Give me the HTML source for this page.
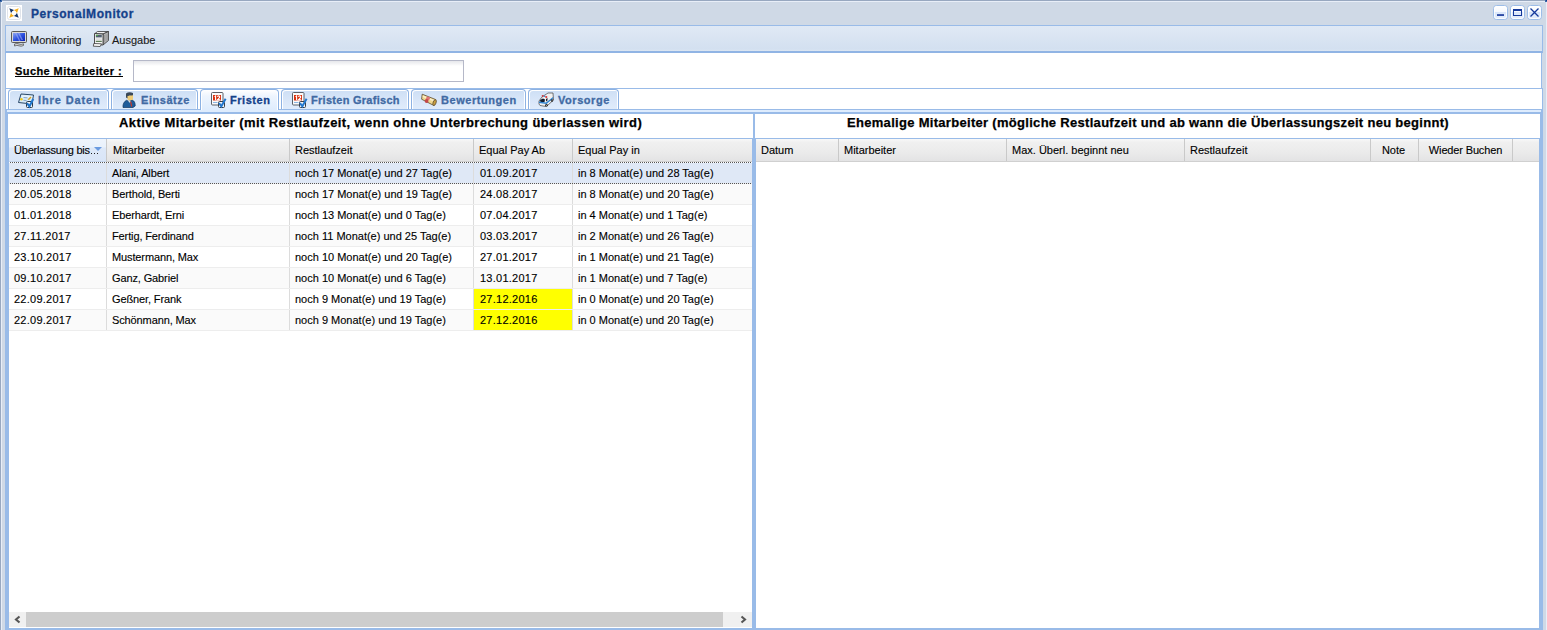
<!DOCTYPE html>
<html><head><meta charset="utf-8"><style>
*{box-sizing:border-box;margin:0;padding:0}
html,body{width:1547px;height:630px;overflow:hidden;background:#cfd9e6;font-family:"Liberation Sans",sans-serif;font-size:11px;color:#000}
.a{position:absolute}
.t{position:absolute;white-space:nowrap;line-height:13px;font-size:11px;-webkit-text-stroke:0.12px currentColor}
svg{position:absolute;overflow:visible}
</style></head><body>
<div class="a" style="left:0;top:0;width:1547px;height:1px;background:#98a8c0"></div>
<div class="a" style="left:1px;top:1px;width:1546px;height:1px;background:#e8eef8"></div>
<div class="a" style="left:0;top:0;width:1px;height:630px;background:#98a8c0"></div>
<div class="a" style="left:1px;top:1px;width:1px;height:629px;background:#e8eef8"></div>
<div class="a" style="left:1546px;top:1px;width:1px;height:629px;background:#e8eef8"></div>
<div class="a" style="left:0;top:0;width:2px;height:2px;background:#3a68a8"></div>
<div class="a" style="left:0;top:0;width:1px;height:1px;background:#0a3c8c"></div>
<div class="a" style="left:1545px;top:0;width:2px;height:2px;background:#3a68a8"></div>
<div class="a" style="left:1546px;top:0;width:1px;height:1px;background:#0a3c8c"></div>
<div class="a" style="left:2px;top:2px;width:1px;height:1px;background:#e8eef8"></div>
<svg style="left:6px;top:5px" width="16" height="16" viewBox="0 0 16 16">
<rect x="0" y="0" width="16" height="16" fill="#fff"/>
<rect x="1.5" y="1.5" width="13" height="13" rx="2" fill="none" stroke="#dfe3ea" stroke-width="1"/>
<polygon points="3.3,3.3 8,5 5,8" fill="#1b3766"/>
<polygon points="12.7,3.3 11,8 8,5" fill="#f4ae1c"/>
<polygon points="3.3,12.7 5,8 8,11" fill="#f4ae1c"/>
<polygon points="12.7,12.7 8,11 11,8" fill="#1b3766"/>
<circle cx="8" cy="8" r="2.3" fill="#fff"/>
</svg>
<div class="t" style="left:31px;top:7px;font-size:12px;line-height:15px;font-weight:bold;color:#15428b;letter-spacing:0.55px;-webkit-text-stroke:0.3px #15428b">PersonalMonitor</div>
<svg style="left:1493px;top:5px" width="15" height="15" viewBox="0 0 15 15">
<defs><linearGradient id="wg1493" x1="0" y1="0" x2="0" y2="1"><stop offset="0" stop-color="#fff"/><stop offset="0.45" stop-color="#f6f9fe"/><stop offset="0.5" stop-color="#d8e6fa"/><stop offset="1" stop-color="#e6effc"/></linearGradient></defs>
<rect x="0.5" y="0.5" width="14" height="14" rx="3" fill="url(#wg1493)" stroke="#9cbde8"/>
<rect x="1.5" y="1.5" width="12" height="12" rx="2" fill="none" stroke="#fff" stroke-opacity="0.8"/>
<rect x="4" y="9.2" width="7" height="1.7" fill="#1a3a9c"/></svg>
<svg style="left:1510px;top:5px" width="15" height="15" viewBox="0 0 15 15">
<defs><linearGradient id="wg1510" x1="0" y1="0" x2="0" y2="1"><stop offset="0" stop-color="#fff"/><stop offset="0.45" stop-color="#f6f9fe"/><stop offset="0.5" stop-color="#d8e6fa"/><stop offset="1" stop-color="#e6effc"/></linearGradient></defs>
<rect x="0.5" y="0.5" width="14" height="14" rx="3" fill="url(#wg1510)" stroke="#9cbde8"/>
<rect x="1.5" y="1.5" width="12" height="12" rx="2" fill="none" stroke="#fff" stroke-opacity="0.8"/>
<rect x="3.5" y="4.5" width="8" height="6" fill="none" stroke="#15399b" stroke-width="1"/><rect x="3" y="4" width="9" height="2" fill="#15399b"/></svg>
<svg style="left:1527px;top:5px" width="15" height="15" viewBox="0 0 15 15">
<defs><linearGradient id="wg1527" x1="0" y1="0" x2="0" y2="1"><stop offset="0" stop-color="#fff"/><stop offset="0.45" stop-color="#f6f9fe"/><stop offset="0.5" stop-color="#d8e6fa"/><stop offset="1" stop-color="#e6effc"/></linearGradient></defs>
<rect x="0.5" y="0.5" width="14" height="14" rx="3" fill="url(#wg1527)" stroke="#9cbde8"/>
<rect x="1.5" y="1.5" width="12" height="12" rx="2" fill="none" stroke="#fff" stroke-opacity="0.8"/>
<path d="M3.5,3.5 L11.5,11.5 M11.5,3.5 L3.5,11.5" stroke="#15399b" stroke-width="1.3"/></svg>
<div class="a" style="left:5px;top:25px;width:1538px;height:28px;border:1px solid #99bbe8;border-bottom:2px solid #90b4e4;background:linear-gradient(#e0e9f5,#d9e4f2 50%,#d3e0f0 92%,#dce6f2)"></div>
<svg style="left:11px;top:31px" width="16" height="16" viewBox="0 0 16 16">
<rect x="0.5" y="0.5" width="15" height="11" rx="1" fill="#d8d8d8" stroke="#5a5a5a"/>
<defs><linearGradient id="mon" x1="0" y1="0" x2="1" y2="1"><stop offset="0" stop-color="#8fa6f0"/><stop offset="0.5" stop-color="#2e52e0"/><stop offset="1" stop-color="#0a22b8"/></linearGradient></defs>
<rect x="2" y="2" width="12" height="8" fill="url(#mon)"/>
<path d="M4,2 L5.5,2 L9.5,10 L8,10 Z M7,2 L8.5,2 L12,9 L10.5,9 Z" fill="#a8b8f8" opacity="0.55"/>
<path d="M3.5,13 Q6,11.8 8,13 Q10,14 12.5,12.8 L12.5,14.5 Q10,15.8 8,14.8 Q6,13.8 3.5,15 Z" fill="#d4d4d4" stroke="#5a5a5a" stroke-width="0.8"/>
</svg>
<div class="t" style="left:30px;top:34px;color:#1a1a1a">Monitoring</div>
<svg style="left:93px;top:31px" width="16" height="16" viewBox="0 0 16 16">
<path d="M2,2.5 L4.5,0.5 L15.5,0.5 L10,3 Z" fill="#f2f2f2" stroke="#3a3a3a" stroke-width="0.8"/>
<path d="M10,3 L15.5,0.5 L15.5,9.5 L10,14 Z" fill="#b4b4b4" stroke="#3a3a3a" stroke-width="0.8"/>
<path d="M11.5,4 L11.5,11.5 M13,3.3 L13,10.3 M14.3,2.6 L14.3,9.3" stroke="#8c8c8c" stroke-width="0.6"/>
<path d="M1.5,2.5 L10,3 L10,14 L1.5,13.5 Z" fill="#f4f4f4" stroke="#3a3a3a" stroke-width="0.9"/>
<rect x="2.8" y="3.8" width="6" height="2.6" fill="#506070"/>
<rect x="3" y="3.8" width="2" height="1" fill="#58b040"/>
<rect x="2.8" y="7.2" width="6" height="2.2" fill="#e0e0e0"/>
<rect x="2.8" y="9.8" width="6" height="1.2" fill="#5e7e58"/>
<path d="M0.8,12.5 L8.5,12.8 L7.2,15.5 L0.3,15.2 Z" fill="#fafafa" stroke="#3a3a3a" stroke-width="0.8"/>
</svg>
<div class="t" style="left:112px;top:34px;color:#1a1a1a">Ausgabe</div>
<div class="a" style="left:5px;top:53px;width:1537px;height:36px;background:#fff;border-left:1px solid #99bbe8;border-right:1px solid #99bbe8"></div>
<div class="t" style="left:15px;top:65px;font-weight:bold;letter-spacing:0.42px;-webkit-text-stroke:0.25px #000">Suche Mitarbeiter :</div>
<div class="a" style="left:15px;top:76px;width:108px;height:1px;background:#000"></div>
<div class="a" style="left:133px;top:60px;width:331px;height:22px;border:1px solid #b5b8c8;background:linear-gradient(#e6e7eb,#fff 5px)"></div>
<div class="a" style="left:5px;top:88px;width:1538px;height:21px;background:#fff;border-left:1px solid #99bbe8;border-right:1px solid #99bbe8"></div>
<div class="a" style="left:5px;top:88px;width:1538px;height:1px;background:#99bbe8"></div>
<div class="a" style="left:5px;top:109px;width:1538px;height:4px;background:#99bbe8"></div>
<div class="a" style="left:6px;top:109px;width:1536px;height:4px;border:1px solid #99bbe8;background:#deecfd"></div>
<div class="a" style="left:8px;top:89px;width:101px;height:20px;border:1px solid #8db2e3;border-bottom:none;border-radius:4px 4px 0 0;background:linear-gradient(#cddff5,#dae7f9 60%,#e0ecfb);box-shadow:inset 1px 1px 0 #fff,inset -1px 0 0 #fff"></div>
<svg style="left:18px;top:92px" width="16" height="16" viewBox="0 0 16 16"><path d="M3,2 L15.5,3 L14,12 L0.5,10.5 Z" fill="#d6ebfa" stroke="#2a4868" stroke-width="1"/>
<path d="M4,3.2 L14.3,4 L13.8,6.5 L3.5,5.5 Z" fill="#e6f3fc"/>
<circle cx="3.4" cy="7.2" r="1.3" fill="#f0c81c"/>
<path d="M5.5,5.5 L9.5,5.8 M5.5,8.3 L8.5,8.5" stroke="#7e9cbc" stroke-width="0.9"/>
<path d="M9.5,7.5 L12.5,4.5 L13.5,5.5 L11,8 Z" fill="#d4a020"/>
<rect x="8.5" y="9.5" width="6" height="6" rx="1" fill="#f4f6f8" stroke="#2d3a48" stroke-width="1"/>
<path d="M9,11 L11.4,14.4 L15.2,7" fill="none" stroke="#1f76cc" stroke-width="2.1"/></svg>
<div class="t" style="left:38px;top:94px;font-weight:bold;color:#416aa3;letter-spacing:0.88px;-webkit-text-stroke:0.3px #416aa3">Ihre Daten</div>
<div class="a" style="left:111px;top:89px;width:87px;height:20px;border:1px solid #8db2e3;border-bottom:none;border-radius:4px 4px 0 0;background:linear-gradient(#cddff5,#dae7f9 60%,#e0ecfb);box-shadow:inset 1px 1px 0 #fff,inset -1px 0 0 #fff"></div>
<svg style="left:121px;top:92px" width="16" height="16" viewBox="0 0 16 16"><path d="M5,1.5 Q8,-0.5 12,1 L12,4.5 L8.5,3.5 L6.5,6.5 L5,5.5 Z" fill="#3a4858"/>
<path d="M6.5,4 L12,3.3 L12,7.5 Q9,9.8 6.5,7.5 Z" fill="#f0cd78"/>
<path d="M2,15.5 Q1.5,10.5 5.5,8.3 L8,9.5 L11.2,8.3 Q14.3,9 14.2,14 L12,15.5 Z" fill="#1e5c9a" stroke="#0f3560" stroke-width="0.7"/>
<path d="M7,8.8 L9.8,9.4 L9,11 Z" fill="#f4f4f4"/>
<path d="M9,9.8 L10.2,9.6 L11.2,14 L10.2,15 Z" fill="#c83a2a"/></svg>
<div class="t" style="left:141px;top:94px;font-weight:bold;color:#416aa3;letter-spacing:0.55px;-webkit-text-stroke:0.3px #416aa3">Einsätze</div>
<div class="a" style="left:200px;top:89px;width:79px;height:21px;border:1px solid #8db2e3;border-bottom:none;border-radius:4px 4px 0 0;background:linear-gradient(#ffffff,#eef5fe 30%,#deecfd);box-shadow:inset 1px 1px 0 #fff,inset -1px 0 0 #fff"></div>
<svg style="left:210px;top:92px" width="16" height="16" viewBox="0 0 16 16"><rect x="1.5" y="0.5" width="11.5" height="12.5" rx="1" fill="#fafafa" stroke="#5a6068" stroke-width="1"/>
<rect x="3" y="3" width="8" height="5.5" fill="#d8300e"/>
<path d="M4.6,4.8 L5.6,3.9 L5.6,8.2" fill="none" stroke="#fff" stroke-width="1.1"/>
<path d="M7.3,4.6 Q8.6,3.4 9.6,4.4 Q10,5.6 8.6,6.6 L7.3,7.9 L10.2,7.9" fill="none" stroke="#fff" stroke-width="1.1"/>
<rect x="3" y="10" width="4.5" height="1" fill="#8db6e0"/>
<rect x="8.5" y="9.5" width="6" height="6" rx="1" fill="#f0f4f8" stroke="#3a4048" stroke-width="1"/>
<path d="M9,11 L11.3,14.3 L15.6,6.8" fill="none" stroke="#2378cf" stroke-width="2"/></svg>
<div class="t" style="left:230px;top:94px;font-weight:bold;color:#15428b;letter-spacing:0.55px;-webkit-text-stroke:0.3px #15428b">Fristen</div>
<div class="a" style="left:281px;top:89px;width:128px;height:20px;border:1px solid #8db2e3;border-bottom:none;border-radius:4px 4px 0 0;background:linear-gradient(#cddff5,#dae7f9 60%,#e0ecfb);box-shadow:inset 1px 1px 0 #fff,inset -1px 0 0 #fff"></div>
<svg style="left:291px;top:92px" width="16" height="16" viewBox="0 0 16 16"><rect x="1.5" y="0.5" width="11.5" height="12.5" rx="1" fill="#fafafa" stroke="#5a6068" stroke-width="1"/>
<rect x="3" y="3" width="8" height="5.5" fill="#d8300e"/>
<path d="M4.6,4.8 L5.6,3.9 L5.6,8.2" fill="none" stroke="#fff" stroke-width="1.1"/>
<path d="M7.3,4.6 Q8.6,3.4 9.6,4.4 Q10,5.6 8.6,6.6 L7.3,7.9 L10.2,7.9" fill="none" stroke="#fff" stroke-width="1.1"/>
<rect x="3" y="10" width="4.5" height="1" fill="#8db6e0"/>
<rect x="8.5" y="9.5" width="6" height="6" rx="1" fill="#f0f4f8" stroke="#3a4048" stroke-width="1"/>
<path d="M9,11 L11.3,14.3 L15.6,6.8" fill="none" stroke="#2378cf" stroke-width="2"/></svg>
<div class="t" style="left:311px;top:94px;font-weight:bold;color:#416aa3;letter-spacing:0.28px;-webkit-text-stroke:0.3px #416aa3">Fristen Grafisch</div>
<div class="a" style="left:411px;top:89px;width:115px;height:20px;border:1px solid #8db2e3;border-bottom:none;border-radius:4px 4px 0 0;background:linear-gradient(#cddff5,#dae7f9 60%,#e0ecfb);box-shadow:inset 1px 1px 0 #fff,inset -1px 0 0 #fff"></div>
<svg style="left:421px;top:92px" width="16" height="16" viewBox="0 0 16 16"><path d="M1.2,2.2 L14.8,7.6 L13,13.6 L0.6,7.2 Z" fill="#f0d890" stroke="#5a4a30" stroke-width="0.8"/>
<path d="M2,3.5 L14,8.3 L13.6,9.8 L1.6,5 Z" fill="#fbefc8"/>
<ellipse cx="13.6" cy="10.6" rx="1.5" ry="3" transform="rotate(20 13.6 10.6)" fill="#c9a040" stroke="#5a4a30" stroke-width="0.7"/>
<circle cx="7" cy="6.3" r="1.9" fill="#e07474"/>
<circle cx="5.6" cy="9" r="1.9" fill="#c44848"/></svg>
<div class="t" style="left:441px;top:94px;font-weight:bold;color:#416aa3;letter-spacing:0.55px;-webkit-text-stroke:0.3px #416aa3">Bewertungen</div>
<div class="a" style="left:528px;top:89px;width:91px;height:20px;border:1px solid #8db2e3;border-bottom:none;border-radius:4px 4px 0 0;background:linear-gradient(#cddff5,#dae7f9 60%,#e0ecfb);box-shadow:inset 1px 1px 0 #fff,inset -1px 0 0 #fff"></div>
<svg style="left:538px;top:92px" width="16" height="16" viewBox="0 0 16 16"><path d="M1,9 L4,5 L8.5,2 L10,1 L15,1 L15.5,8 L9.5,13.5 L8,14.5 L2,13.5 L1,12 Z" fill="#f0f0f0" stroke="#444" stroke-width="0.7"/>
<path d="M2,8 L5,6.5 L7,7.5 L6.5,10 L2.5,10 Z" fill="#0e1a2a"/>
<path d="M8,7 L9.5,6 L9.5,8.5 L8,9.5 Z" fill="#1a2030"/>
<path d="M1,9.5 L8,10.5 L15,5 L15,6.5 L8.5,12 L1,11 Z" fill="#2a80d0"/>
<rect x="3.8" y="3.2" width="1.8" height="1.4" fill="#d82020"/><rect x="5.8" y="3.8" width="1.6" height="1.2" fill="#3a90e0"/><rect x="7.4" y="4.2" width="1.8" height="1.6" fill="#d82020"/>
<circle cx="8.5" cy="13.3" r="1.3" fill="#222"/><circle cx="8.5" cy="13.3" r="0.5" fill="#ddd"/>
<circle cx="14" cy="8.5" r="1.2" fill="#222"/><circle cx="14" cy="8.5" r="0.45" fill="#ddd"/></svg>
<div class="t" style="left:558px;top:94px;font-weight:bold;color:#416aa3;letter-spacing:0.55px;-webkit-text-stroke:0.3px #416aa3">Vorsorge</div>
<div class="a" style="left:5px;top:113px;width:1538px;height:517px;background:#99bbe8"></div>
<div class="a" style="left:8px;top:114px;width:745px;height:24px;background:#fff"></div>
<div class="a" style="left:755px;top:114px;width:785px;height:24px;background:#fff"></div>
<div class="t" style="left:119px;top:115px;font-size:13px;line-height:15px;font-weight:bold;letter-spacing:0.4px;-webkit-text-stroke:0.25px #000">Aktive Mitarbeiter (mit Restlaufzeit, wenn ohne Unterbrechung überlassen wird)</div>
<div class="t" style="left:847px;top:115px;font-size:13px;line-height:15px;font-weight:bold;letter-spacing:0.3px;-webkit-text-stroke:0.25px #000">Ehemalige Mitarbeiter (mögliche Restlaufzeit und ab wann die Überlassungszeit neu beginnt)</div>
<div class="a" style="left:9px;top:139px;width:743px;height:489px;background:#fff"></div>
<div class="a" style="left:756px;top:139px;width:783px;height:489px;background:#fff"></div>
<div class="a" style="left:9px;top:139px;width:743px;height:23px;background:linear-gradient(#f8f8f8,#f0f0f0 15%,#ebebeb 60%,#e3e3e4);border-bottom:1px solid #d0d0d0"></div>
<div class="a" style="left:9px;top:139px;width:97px;height:23px;background:linear-gradient(#eef4fc,#e9f1fb 8px,#dde8f8 9px,#d9e5f7);border-bottom:1px solid #c5d6ee"></div>
<div class="a" style="left:106px;top:139px;width:1px;height:22px;background:#c9c9c9"></div>
<div class="a" style="left:289px;top:139px;width:1px;height:22px;background:#c9c9c9"></div>
<div class="a" style="left:473px;top:139px;width:1px;height:22px;background:#c9c9c9"></div>
<div class="a" style="left:572px;top:139px;width:1px;height:22px;background:#c9c9c9"></div>
<div class="t" style="left:14px;top:144px;letter-spacing:-0.2px">Überlassung bis</div>
<div class="t" style="left:113px;top:144px">Mitarbeiter</div>
<div class="t" style="left:295px;top:144px">Restlaufzeit</div>
<div class="t" style="left:479px;top:144px">Equal Pay Ab</div>
<div class="t" style="left:578px;top:144px">Equal Pay in</div>
<div class="a" style="left:91px;top:153px;width:1px;height:1px;background:#222"></div>
<div class="a" style="left:94px;top:153px;width:1px;height:1px;background:#222"></div>
<div class="a" style="left:97px;top:153px;width:1px;height:1px;background:#222"></div>
<svg style="left:94px;top:147px" width="8" height="4" viewBox="0 0 8 4"><polygon points="0,0 8,0 4,4" fill="#6a9ae0"/></svg>
<div class="a" style="left:9px;top:163px;width:743px;height:20px;background:#dfe8f6"></div>
<div class="a" style="left:9px;top:183px;width:743px;height:1px;background:#ededed"></div>
<div class="a" style="left:106px;top:163px;width:1px;height:20px;background:#dcdcdc"></div>
<div class="a" style="left:289px;top:163px;width:1px;height:20px;background:#dcdcdc"></div>
<div class="a" style="left:473px;top:163px;width:1px;height:20px;background:#dcdcdc"></div>
<div class="a" style="left:572px;top:163px;width:1px;height:20px;background:#dcdcdc"></div>
<div class="t" style="left:14px;top:167px;letter-spacing:0.25px">28.05.2018</div>
<div class="t" style="left:112px;top:167px;letter-spacing:-0.12px">Alani, Albert</div>
<div class="t" style="left:295px;top:167px">noch 17 Monat(e) und 27 Tag(e)</div>
<div class="t" style="left:480px;top:167px;letter-spacing:0.25px">01.09.2017</div>
<div class="t" style="left:578px;top:167px">in 8 Monat(e) und 28 Tag(e)</div>
<div class="a" style="left:9px;top:184px;width:743px;height:20px;background:#fafafa"></div>
<div class="a" style="left:9px;top:204px;width:743px;height:1px;background:#ededed"></div>
<div class="a" style="left:106px;top:184px;width:1px;height:20px;background:#dcdcdc"></div>
<div class="a" style="left:289px;top:184px;width:1px;height:20px;background:#dcdcdc"></div>
<div class="a" style="left:473px;top:184px;width:1px;height:20px;background:#dcdcdc"></div>
<div class="a" style="left:572px;top:184px;width:1px;height:20px;background:#dcdcdc"></div>
<div class="t" style="left:14px;top:188px;letter-spacing:0.25px">20.05.2018</div>
<div class="t" style="left:112px;top:188px;letter-spacing:-0.12px">Berthold, Berti</div>
<div class="t" style="left:295px;top:188px">noch 17 Monat(e) und 19 Tag(e)</div>
<div class="t" style="left:480px;top:188px;letter-spacing:0.25px">24.08.2017</div>
<div class="t" style="left:578px;top:188px">in 8 Monat(e) und 20 Tag(e)</div>
<div class="a" style="left:9px;top:205px;width:743px;height:20px;background:#fff"></div>
<div class="a" style="left:9px;top:225px;width:743px;height:1px;background:#ededed"></div>
<div class="a" style="left:106px;top:205px;width:1px;height:20px;background:#dcdcdc"></div>
<div class="a" style="left:289px;top:205px;width:1px;height:20px;background:#dcdcdc"></div>
<div class="a" style="left:473px;top:205px;width:1px;height:20px;background:#dcdcdc"></div>
<div class="a" style="left:572px;top:205px;width:1px;height:20px;background:#dcdcdc"></div>
<div class="t" style="left:14px;top:209px;letter-spacing:0.25px">01.01.2018</div>
<div class="t" style="left:112px;top:209px;letter-spacing:-0.12px">Eberhardt, Erni</div>
<div class="t" style="left:295px;top:209px">noch 13 Monat(e) und 0 Tag(e)</div>
<div class="t" style="left:480px;top:209px;letter-spacing:0.25px">07.04.2017</div>
<div class="t" style="left:578px;top:209px">in 4 Monat(e) und 1 Tag(e)</div>
<div class="a" style="left:9px;top:226px;width:743px;height:20px;background:#fafafa"></div>
<div class="a" style="left:9px;top:246px;width:743px;height:1px;background:#ededed"></div>
<div class="a" style="left:106px;top:226px;width:1px;height:20px;background:#dcdcdc"></div>
<div class="a" style="left:289px;top:226px;width:1px;height:20px;background:#dcdcdc"></div>
<div class="a" style="left:473px;top:226px;width:1px;height:20px;background:#dcdcdc"></div>
<div class="a" style="left:572px;top:226px;width:1px;height:20px;background:#dcdcdc"></div>
<div class="t" style="left:14px;top:230px;letter-spacing:0.25px">27.11.2017</div>
<div class="t" style="left:112px;top:230px;letter-spacing:-0.12px">Fertig, Ferdinand</div>
<div class="t" style="left:295px;top:230px">noch 11 Monat(e) und 25 Tag(e)</div>
<div class="t" style="left:480px;top:230px;letter-spacing:0.25px">03.03.2017</div>
<div class="t" style="left:578px;top:230px">in 2 Monat(e) und 26 Tag(e)</div>
<div class="a" style="left:9px;top:247px;width:743px;height:20px;background:#fff"></div>
<div class="a" style="left:9px;top:267px;width:743px;height:1px;background:#ededed"></div>
<div class="a" style="left:106px;top:247px;width:1px;height:20px;background:#dcdcdc"></div>
<div class="a" style="left:289px;top:247px;width:1px;height:20px;background:#dcdcdc"></div>
<div class="a" style="left:473px;top:247px;width:1px;height:20px;background:#dcdcdc"></div>
<div class="a" style="left:572px;top:247px;width:1px;height:20px;background:#dcdcdc"></div>
<div class="t" style="left:14px;top:251px;letter-spacing:0.25px">23.10.2017</div>
<div class="t" style="left:112px;top:251px;letter-spacing:-0.12px">Mustermann, Max</div>
<div class="t" style="left:295px;top:251px">noch 10 Monat(e) und 20 Tag(e)</div>
<div class="t" style="left:480px;top:251px;letter-spacing:0.25px">27.01.2017</div>
<div class="t" style="left:578px;top:251px">in 1 Monat(e) und 21 Tag(e)</div>
<div class="a" style="left:9px;top:268px;width:743px;height:20px;background:#fafafa"></div>
<div class="a" style="left:9px;top:288px;width:743px;height:1px;background:#ededed"></div>
<div class="a" style="left:106px;top:268px;width:1px;height:20px;background:#dcdcdc"></div>
<div class="a" style="left:289px;top:268px;width:1px;height:20px;background:#dcdcdc"></div>
<div class="a" style="left:473px;top:268px;width:1px;height:20px;background:#dcdcdc"></div>
<div class="a" style="left:572px;top:268px;width:1px;height:20px;background:#dcdcdc"></div>
<div class="t" style="left:14px;top:272px;letter-spacing:0.25px">09.10.2017</div>
<div class="t" style="left:112px;top:272px;letter-spacing:-0.12px">Ganz, Gabriel</div>
<div class="t" style="left:295px;top:272px">noch 10 Monat(e) und 6 Tag(e)</div>
<div class="t" style="left:480px;top:272px;letter-spacing:0.25px">13.01.2017</div>
<div class="t" style="left:578px;top:272px">in 1 Monat(e) und 7 Tag(e)</div>
<div class="a" style="left:9px;top:289px;width:743px;height:20px;background:#fff"></div>
<div class="a" style="left:9px;top:309px;width:743px;height:1px;background:#ededed"></div>
<div class="a" style="left:474px;top:289px;width:98px;height:20px;background:#ffff00"></div>
<div class="a" style="left:106px;top:289px;width:1px;height:20px;background:#dcdcdc"></div>
<div class="a" style="left:289px;top:289px;width:1px;height:20px;background:#dcdcdc"></div>
<div class="a" style="left:473px;top:289px;width:1px;height:20px;background:#dcdcdc"></div>
<div class="a" style="left:572px;top:289px;width:1px;height:20px;background:#dcdcdc"></div>
<div class="t" style="left:14px;top:293px;letter-spacing:0.25px">22.09.2017</div>
<div class="t" style="left:112px;top:293px;letter-spacing:-0.12px">Geßner, Frank</div>
<div class="t" style="left:295px;top:293px">noch 9 Monat(e) und 19 Tag(e)</div>
<div class="t" style="left:480px;top:293px;letter-spacing:0.25px">27.12.2016</div>
<div class="t" style="left:578px;top:293px">in 0 Monat(e) und 20 Tag(e)</div>
<div class="a" style="left:9px;top:310px;width:743px;height:20px;background:#fafafa"></div>
<div class="a" style="left:9px;top:330px;width:743px;height:1px;background:#ededed"></div>
<div class="a" style="left:474px;top:310px;width:98px;height:20px;background:#ffff00"></div>
<div class="a" style="left:106px;top:310px;width:1px;height:20px;background:#dcdcdc"></div>
<div class="a" style="left:289px;top:310px;width:1px;height:20px;background:#dcdcdc"></div>
<div class="a" style="left:473px;top:310px;width:1px;height:20px;background:#dcdcdc"></div>
<div class="a" style="left:572px;top:310px;width:1px;height:20px;background:#dcdcdc"></div>
<div class="t" style="left:14px;top:314px;letter-spacing:0.25px">22.09.2017</div>
<div class="t" style="left:112px;top:314px;letter-spacing:-0.12px">Schönmann, Max</div>
<div class="t" style="left:295px;top:314px">noch 9 Monat(e) und 19 Tag(e)</div>
<div class="t" style="left:480px;top:314px;letter-spacing:0.25px">27.12.2016</div>
<div class="t" style="left:578px;top:314px">in 0 Monat(e) und 20 Tag(e)</div>
<div class="a" style="left:9px;top:162px;width:743px;height:1px;background:repeating-linear-gradient(90deg,transparent 0 1px,#555 1px 2px)"></div>
<div class="a" style="left:9px;top:183px;width:743px;height:1px;background:repeating-linear-gradient(90deg,transparent 0 1px,#555 1px 2px)"></div>
<div class="a" style="left:9px;top:612px;width:743px;height:15px;background:#f0f0f0"></div>
<div class="a" style="left:26px;top:612px;width:697px;height:15px;background:#cdcdcd"></div>
<svg style="left:14px;top:616px" width="7" height="7" viewBox="0 0 7 7"><path d="M5.5,0.5 L2,3.5 L5.5,6.5" fill="none" stroke="#555" stroke-width="2.1"/></svg>
<svg style="left:740px;top:616px" width="7" height="7" viewBox="0 0 7 7"><path d="M1.5,0.5 L5,3.5 L1.5,6.5" fill="none" stroke="#555" stroke-width="2.1"/></svg>
<div class="a" style="left:756px;top:139px;width:783px;height:23px;background:linear-gradient(#f8f8f8,#f0f0f0 15%,#ebebeb 60%,#e3e3e4);border-bottom:1px solid #d0d0d0"></div>
<div class="a" style="left:838px;top:139px;width:1px;height:22px;background:#c9c9c9"></div>
<div class="a" style="left:1006px;top:139px;width:1px;height:22px;background:#c9c9c9"></div>
<div class="a" style="left:1184px;top:139px;width:1px;height:22px;background:#c9c9c9"></div>
<div class="a" style="left:1370px;top:139px;width:1px;height:22px;background:#c9c9c9"></div>
<div class="a" style="left:1418px;top:139px;width:1px;height:22px;background:#c9c9c9"></div>
<div class="a" style="left:1512px;top:139px;width:1px;height:22px;background:#c9c9c9"></div>
<div class="t" style="left:761px;top:144px">Datum</div>
<div class="t" style="left:844px;top:144px">Mitarbeiter</div>
<div class="t" style="left:1012px;top:144px">Max. Überl. beginnt neu</div>
<div class="t" style="left:1190px;top:144px">Restlaufzeit</div>
<div class="t" style="left:1370px;top:144px;width:47px;text-align:center">Note</div>
<div class="t" style="left:1419px;top:144px;width:93px;text-align:center;letter-spacing:-0.15px">Wieder Buchen</div>
</body></html>
